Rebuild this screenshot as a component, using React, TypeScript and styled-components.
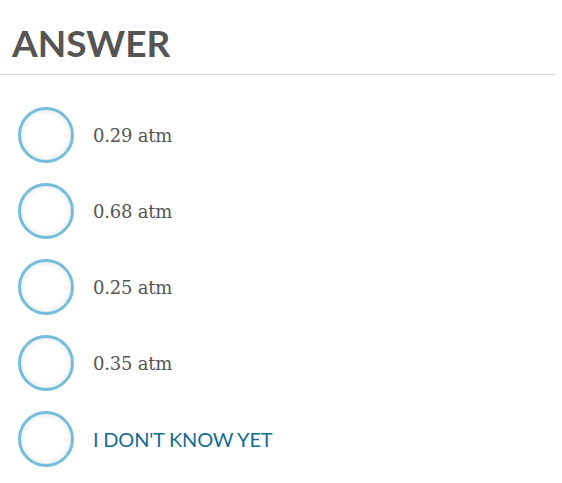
import styled, { createGlobalStyle } from "styled-components";

const GlobalStyle = createGlobalStyle`
    body {
        margin: 0;
        background: #fff;
        font-family: Lato, "Liberation Sans", sans-serif;
    }
`
const Panel = styled.div`
    width: 555px;
`
const Header = styled.div`
    height: 74px;
    border-bottom: 1px solid #dcdcdc;
    box-sizing: content-box;
    display: flex;
    align-items: flex-end;
`
const Title = styled.h2`
    margin: 0 0 13px 12px;
    font: bold 37px Lato, sans-serif;
    color: #555;
    line-height: 1;
`
const Options = styled.div`
    display: flex;
    flex-direction: column;
    gap: 20px;
    padding: 32px 0 0 18px;
`
const Option = styled.label`
    display: flex;
    align-items: center;
    gap: 19px;
    cursor: pointer;
`
const Radio = styled.span`
    width: 56px;
    height: 56px;
    border-radius: 50%;
    border: 3px solid #74bedb;
    box-sizing: border-box;
    box-shadow: inset 0 0 6px rgba(0, 0, 0, 0.12);
    background: #fff;
    flex-shrink: 0;
`
const Label = styled.span<{ unsure?: boolean }>`
    font-family: ${p => p.unsure ? 'Lato, sans-serif' : '"DejaVu Serif", serif'};
    font-size: ${p => p.unsure ? 20 : 18}px;
    color: ${p => p.unsure ? '#156c92' : '#555'};
    letter-spacing: ${p => p.unsure ? -0.2 : -0.2}px;
`

const answers = ['0.29 atm', '0.68 atm', '0.25 atm', '0.35 atm']

export default function App() {
    return (
        <>
            <GlobalStyle />
            <Panel>
                <Header>
                    <Title>ANSWER</Title>
                </Header>
                <Options>
                    {answers.map(a => (
                        <Option key={a}>
                            <Radio />
                            <Label>{a}</Label>
                        </Option>
                    ))}
                    <Option>
                        <Radio />
                        <Label unsure>I DON'T KNOW YET</Label>
                    </Option>
                </Options>
            </Panel>
        </>
    )
}
